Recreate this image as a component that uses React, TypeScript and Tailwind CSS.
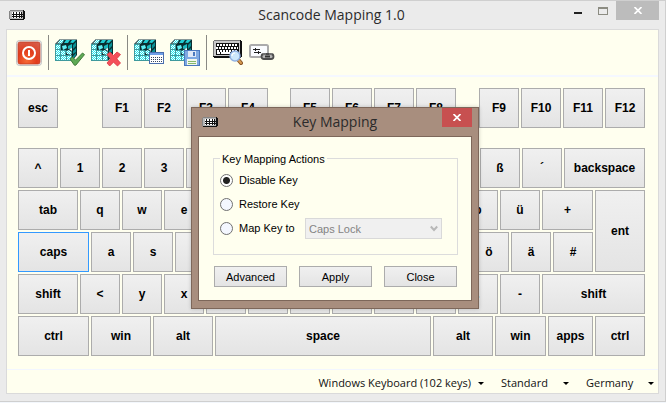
import { useState } from 'react';
import type { ReactNode } from 'react';

type KeyDef = {
  id: string;
  label: string;
  width: number;
  spacer?: boolean;
};

const key = (label: string, width = 40, id = label): KeyDef => ({ id, label, width });
const space = (id: string, width: number): KeyDef => ({ id, label: '', width, spacer: true });

const functionRow: KeyDef[] = [
  key('esc'),
  space('gap-1', 40),
  key('F1'),
  key('F2'),
  key('F3'),
  key('F4'),
  space('gap-2', 18),
  key('F5'),
  key('F6'),
  key('F7'),
  key('F8'),
  space('gap-3', 19),
  key('F9'),
  key('F10'),
  key('F11'),
  key('F12'),
];

const numberRow: KeyDef[] = [
  ...['^', '1', '2', '3', '4', '5', '6', '7', '8', '9', '0', 'ß', '´'].map((c) => key(c)),
  key('backspace', 81),
];

const tabRow: KeyDef[] = [
  key('tab', 60),
  ...['q', 'w', 'e', 'r', 't', 'z', 'u', 'i', 'o', 'p', 'ü'].map((c) => key(c)),
  key('+', 51),
];

const capsRow: KeyDef[] = [
  key('caps', 71),
  ...['a', 's', 'd', 'f', 'g', 'h', 'j', 'k', 'l', 'ö', 'ä', '#'].map((c) => key(c)),
];

const shiftRow: KeyDef[] = [
  key('shift', 60, 'shift-left'),
  ...['<', 'y', 'x', 'c', 'v', 'b', 'n', 'm', ',', '.', '-'].map((c) => key(c)),
  key('shift', 103, 'shift-right'),
];

const bottomRow: KeyDef[] = [
  key('ctrl', 71, 'ctrl-left'),
  key('win', 60, 'win-left'),
  key('alt', 60, 'alt-left'),
  key('space', 216),
  key('alt', 60, 'alt-right'),
  key('win', 51, 'win-right'),
  key('apps', 45),
  key('ctrl', 50, 'ctrl-right'),
];

function KeyboardGlyph() {
  return (
    <svg width="16" height="10" viewBox="0 0 16 10" shapeRendering="crispEdges" aria-hidden="true">
      <path d="M1 0h14v1h1v8h-1v1H1V9H0V1h1z" fill="#111" />
      <path d="M1 0h13v1H1zM0 1h1v8H0z" fill="#858585" />
      <path d="M1 1h14v8H1z" fill="#b9b9b9" />
      <path d="M3 2h10v6H3z" fill="#fff" />
      <path d="M3 4h11v1H3zM3 6h11v1H3zM4 2h1v6H4zM7 2h1v6H7zM10 2h1v6h-1zM12 2h1v6h-1zM14 1h1v8h-1z" fill="#111" />
    </svg>
  );
}

function PowerIcon() {
  return (
    <svg width="26" height="26" viewBox="0 0 26 26" aria-hidden="true">
      <defs>
        <radialGradient id="power" cx=".4" cy=".85" r=".9">
          <stop offset="0" stopColor="#f56a35" />
          <stop offset=".5" stopColor="#e23c1c" />
          <stop offset="1" stopColor="#d65a48" />
        </radialGradient>
      </defs>
      <rect x=".5" y=".5" width="25" height="25" rx="3" fill="#ececec" stroke="#c3c3c3" />
      <rect x="2" y="2" width="22" height="22" rx="2" fill="url(#power)" stroke="#c0391f" strokeWidth=".7" />
      <circle cx="13" cy="13" r="6" fill="none" stroke="#fff" strokeWidth="2" />
      <path d="M13 10v6" stroke="#fff" strokeWidth="2" />
    </svg>
  );
}

function RegistryIcon({ children }: { children: ReactNode }) {
  return (
    <svg width="30" height="28" viewBox="0 0 30 28" aria-hidden="true">
      <defs>
        <pattern id="dither" width="2" height="2" patternUnits="userSpaceOnUse">
          <rect width="2" height="2" fill="#2be6ee" />
          <path d="M0 0h1v1H0zM1 1h1v1H1z" fill="#f2ffff" />
        </pattern>
      </defs>
      <path d="M0 5 5 0h17v16l-5 6H0z" fill="#0a2f31" />
      {/* intact front tiles */}
      <g shapeRendering="crispEdges">
        <path d="M0 5h6v17H0zM6 11h5v11H6zM11 16h6v6h-6z" fill="#3f9a9d" />
        <path
          d="M1 6h4v4H1zM1 11h4v5H1zM6 12h4v4H6zM1 17h4v4H1zM6 17h5v4H6zM12 17h4v4h-4z"
          fill="url(#dither)"
        />
      </g>
      {/* top and side faces */}
      <path d="M2 4.500 5 1h4L7 4.500z" fill="url(#dither)" />
      <path d="m9 4 2-3h4l-2 3zM15 3.500 17 1h4l-3 3z" fill="#22cdd3" />
      <path d="M18 6l3-3v4l-3 3zM18 12l3-3v4l-3 2zM18 17l3-3v2l-3 4z" fill="#0a9095" />
      {/* loose tiles */}
      <path d="m7 7 4-1 1 3-4 2z" fill="#5ff0f5" />
      <path d="m13 7 4-2v4l-4 1z" fill="#1bb9bf" />
      <path d="m11 12 3-1 3 2-1 3-4-1z" fill="url(#dither)" />
      <path d="m14 10 3-1v3z" fill="#d8ffff" />
      <path d="M4.500.5H22M.5 5l4-4.500" stroke="#8a9a9a" fill="none" />
      {children}
    </svg>
  );
}

function CheckBadge() {
  return (
    <path
      d="m15 20 2.5-2 3 3.2L27.5 14l2 1.6-8.7 10.6h-1.4z"
      fill="#5eaa54"
      stroke="#3f7a39"
      strokeWidth="1"
      strokeLinejoin="round"
    />
  );
}

function CrossBadge() {
  return (
    <path
      d="m19 13 3.5 3.5L26 13l3.5 2.5-3.7 4.3 3.7 4.2-3 3-4-3.8-3.8 3.8-2.7-3 3.7-4.2-3.7-4.3z"
      fill="#f4505a"
      stroke="#dc3542"
      strokeWidth=".8"
      strokeLinejoin="round"
    />
  );
}

function CalendarBadge() {
  return (
    <g shapeRendering="crispEdges">
      <path d="M15 13h15v12H15z" fill="#4b6fae" />
      <path d="M16 14h13v2H16z" fill="#6f9fe8" />
      <path d="M16 16h13v8H16z" fill="#fff" />
      <path d="M17 18.500h11M17 20.500h11M17 22.500h11" stroke="#38455e" strokeDasharray="1 1" />
    </g>
  );
}

function DiskBadge() {
  return (
    <g shapeRendering="crispEdges">
      <path d="M14 11h15l1 1v15H14z" fill="#4a78bd" />
      <path d="M15 12h14v14H15z" fill="#7ea9e2" />
      <path d="M18 12h8v6h-8z" fill="#dfe9f7" />
      <path d="M23 13h2v4h-2z" fill="#4a78bd" />
      <path d="M17 20h10v6H17z" fill="#f2f7ee" />
      <path d="M18 22h8v1h-8zM18 24h8v1h-8z" fill="#86b96b" />
    </g>
  );
}

function KeyboardSearchIcon() {
  return (
    <svg width="30" height="26" viewBox="0 0 30 26" aria-hidden="true">
      <g shapeRendering="crispEdges">
        <path d="M1 0h27v1h1v16h-1v1H1v-1H0V1h1z" fill="#111" />
        <path d="M0 1h1v15H0zM1 0h26v1H1z" fill="#777" />
        <path d="M1 1h26v15H1z" fill="#c9c9c9" />
        <path d="M3 3h23v12H3z" fill="#111" />
        <path d="M4 4.500h21M3 7.500h22M4 10.500h21" stroke="#fff" strokeWidth="2" strokeDasharray="2 1" />
        <path d="M4 12h3v2H4zM8 12h9v2H8zM20 12h2v2h-2zM23 12h2v2h-2z" fill="#fff" />
      </g>
      <path d="m25.5 20 2.500 3" stroke="#8a5526" strokeWidth="4" strokeLinecap="round" />
      <path d="m25.500 20 2.500 3" stroke="#d69a50" strokeWidth="2" strokeLinecap="round" />
      <circle cx="22" cy="16" r="5" fill="#cde7fb" stroke="#8fb0e2" strokeWidth="1.4" />
      <path d="M19 16c0-2 1-3 3-3" stroke="#fff" fill="none" strokeWidth="1.2" />
    </svg>
  );
}

function KeyLinkIcon() {
  return (
    <svg width="26" height="17" viewBox="0 0 26 17" aria-hidden="true">
      <rect x="1" y="1" width="18" height="12" rx="1.5" fill="#fafcff" stroke="#ababab" strokeWidth="2" />
      <g shapeRendering="crispEdges">
        <path d="M4 5h7v1H4zM5 8h7v1H5zM6 4h1v3H6zM9 7h1v3H9z" fill="#222" />
      </g>
      <rect x="12.500" y="10" width="12" height="5" rx="2.500" fill="#b5b5b5" stroke="#4c4c4c" strokeWidth="1.800" />
      <path d="M16 12.500h5" stroke="#333" strokeWidth="2" />
      <path d="M14 10h3M20 10h3" stroke="#969696" />
    </svg>
  );
}

function ToolButton({ label, children }: { label: string; children: ReactNode }) {
  return (
    <button type="button" aria-label={label} className="flex shrink-0 items-center justify-center">
      {children}
    </button>
  );
}

function ToolSeparator() {
  return <div className="h-[35px] w-px shrink-0 bg-[#8a8a84]" />;
}

function Toolbar() {
  return (
    <div className="flex h-[47px] items-center gap-[6px] border-b-2 border-[#f5f8ff] pr-2 pl-[9px]">
      <ToolButton label="Exit">
        <PowerIcon />
      </ToolButton>
      <ToolSeparator />
      <ToolButton label="Apply mapping">
        <RegistryIcon>
          <CheckBadge />
        </RegistryIcon>
      </ToolButton>
      <ToolButton label="Remove mapping">
        <RegistryIcon>
          <CrossBadge />
        </RegistryIcon>
      </ToolButton>
      <ToolSeparator />
      <ToolButton label="Show mapping">
        <RegistryIcon>
          <CalendarBadge />
        </RegistryIcon>
      </ToolButton>
      <ToolButton label="Save mapping">
        <RegistryIcon>
          <DiskBadge />
        </RegistryIcon>
      </ToolButton>
      <ToolSeparator />
      <ToolButton label="Detect key">
        <KeyboardSearchIcon />
      </ToolButton>
      <ToolButton label="Link key">
        <KeyLinkIcon />
      </ToolButton>
    </div>
  );
}

type KeyProps = {
  item: KeyDef;
  selected: string;
  onSelect: (id: string) => void;
};

function Key({ item, selected, onSelect }: KeyProps) {
  if (item.spacer) {
    return <div className="basis-0" style={{ flexGrow: item.width }} />;
  }
  // the two border pixels are not part of the flexible width
  return (
    <button
      type="button"
      onClick={() => onSelect(item.id)}
      className={`min-h-10 min-w-0 basis-0 border bg-linear-to-b from-[#f0f0f0] to-[#e4e4e4] text-center text-[12px] leading-4 font-bold text-black ${
        item.id === selected ? 'border-[#3399ff]' : 'border-[#acacac]'
      }`}
      style={{ flexGrow: item.width - 2 }}
    >
      {item.label}
    </button>
  );
}

function KeyRow({ keys, selected, onSelect }: { keys: KeyDef[]; selected: string; onSelect: (id: string) => void }) {
  return (
    <div className="flex gap-[2px]">
      {keys.map((item) => (
        <Key key={item.id} item={item} selected={selected} onSelect={onSelect} />
      ))}
    </div>
  );
}

function Keyboard() {
  const [selected, setSelected] = useState('caps');

  return (
    <div className="flex flex-col gap-[2px] pt-[11px] pr-[13px] pb-[13px] pl-[11px]">
      <div className="pb-[18px]">
        <KeyRow keys={functionRow} selected={selected} onSelect={setSelected} />
      </div>
      <KeyRow keys={numberRow} selected={selected} onSelect={setSelected} />
      <div className="flex gap-[2px]">
        <div className="flex grow-[575] basis-0 flex-col gap-[2px]">
          <KeyRow keys={tabRow} selected={selected} onSelect={setSelected} />
          <KeyRow keys={capsRow} selected={selected} onSelect={setSelected} />
        </div>
        <Key item={key('ent', 50)} selected={selected} onSelect={setSelected} />
      </div>
      <KeyRow keys={shiftRow} selected={selected} onSelect={setSelected} />
      <KeyRow keys={bottomRow} selected={selected} onSelect={setSelected} />
    </div>
  );
}

function StatusMenu({ label }: { label: string }) {
  return (
    <button type="button" className="flex min-w-[68px] items-center justify-between gap-[7px]">
      {label}
      <svg width="6" height="3" viewBox="0 0 6 3" aria-hidden="true">
        <path d="M0 0h6L3 3z" fill="#000" />
      </svg>
    </button>
  );
}

function StatusBar() {
  return (
    <div className="flex h-6 items-center justify-end gap-[17px] border-t border-[#f2f6ff] pt-[3px] pr-1 font-['Open_Sans','Noto_Sans',sans-serif] text-[11px] leading-4 text-[#111]">
      <StatusMenu label="Windows Keyboard (102 keys)" />
      <StatusMenu label="Standard" />
      <StatusMenu label="Germany" />
    </div>
  );
}

function ActionOption({ id, label, checked, onChange }: { id: string; label: string; checked: boolean; onChange: () => void }) {
  return (
    <div className="flex h-6 items-center gap-[6px]">
      <input
        id={id}
        type="radio"
        name="action"
        checked={checked}
        onChange={onChange}
        className="size-[13px] appearance-none rounded-full border border-[#707070] bg-[#f4f7ff] checked:bg-[radial-gradient(circle,#222_0_3px,#fff_4px)]"
      />
      <label htmlFor={id}>{label}</label>
    </div>
  );
}

function DialogButton({ label }: { label: string }) {
  return (
    <button
      type="button"
      className="h-[21px] flex-1 border border-[#acacac] bg-linear-to-b from-[#f0f0f0] to-[#e4e4e4] text-center"
    >
      {label}
    </button>
  );
}

function KeyMappingDialog() {
  const [action, setAction] = useState('disable');

  return (
    <div
      role="dialog"
      aria-label="Key Mapping"
      className="absolute top-[107px] left-[191px] w-72 border border-[#7d675a] bg-[#a88e7e] px-[6px] pb-[7px] shadow-[0_0_4px_rgba(0,0,0,0.2)]"
    >
      <div className="flex h-7 items-start justify-between pl-1">
        <div className="flex w-[26px] pt-[9px]">
          <KeyboardGlyph />
        </div>
        <h2 className="pt-1 font-['Open_Sans','Noto_Sans',sans-serif] text-[14px] leading-5 text-[#2b2b2b]">Key Mapping</h2>
        <button type="button" aria-label="Close dialog" className="flex h-[19px] w-[30px] items-center justify-center bg-[#c75050]">
          <svg width="8" height="7" viewBox="0 0 8 7" aria-hidden="true">
            <path d="m.5 0 7 7m0-7-7 7" stroke="#fff" strokeWidth="1.700" />
          </svg>
        </button>
      </div>
      <div className="border border-[#7d675a] bg-[#ffffef] pt-[14px] pr-[13px] pb-[13px] pl-[14px] text-[11px] leading-4 text-black">
        <fieldset className="border border-[#dcdcdc] pt-[2px] pr-[7px] pb-[14px] pl-[6px]">
          <legend className="h-[15px] px-[2px]">Key Mapping Actions</legend>
          <ActionOption
            id="disable"
            label="Disable Key"
            checked={action === 'disable'}
            onChange={() => setAction('disable')}
          />
          <ActionOption
            id="restore"
            label="Restore Key"
            checked={action === 'restore'}
            onChange={() => setAction('restore')}
          />
          <div className="flex items-center justify-between pr-2">
            <ActionOption id="map" label="Map Key to" checked={action === 'map'} onChange={() => setAction('map')} />
            <div className="grid w-[137px] items-center pt-px">
              <select
                disabled={action !== 'map'}
                aria-label="Target key"
                className="col-start-1 row-start-1 h-[21px] appearance-none border border-[#d9d9d9] bg-[#f0f0f0] pl-[3px] text-[#838383] opacity-100"
              >
                <option>Caps Lock</option>
              </select>
              <svg
                width="8"
                height="7"
                viewBox="0 0 8 7"
                className="pointer-events-none col-start-1 row-start-1 mr-1 justify-self-end"
                aria-hidden="true"
              >
                <path d="m.8 1.500 3.200 3.500 3.200-3.500" fill="none" stroke="#b8b8b8" strokeWidth="2" />
              </svg>
            </div>
          </div>
        </fieldset>
        <div className="mt-[11px] flex gap-3 px-px">
          <DialogButton label="Advanced" />
          <DialogButton label="Apply" />
          <DialogButton label="Close" />
        </div>
      </div>
    </div>
  );
}

function TitleBar() {
  return (
    <header className="flex h-7 items-start justify-between">
      <div className="flex w-[98px] pt-[9px] pl-[3px]">
        <KeyboardGlyph />
      </div>
      <h1 className="pt-1 font-['Open_Sans','Noto_Sans',sans-serif] text-[14px] leading-5 text-[#2b2b2b]">
        Scancode Mapping 1.0
      </h1>
      <div className="flex w-[100px] justify-end">
        <button type="button" aria-label="Minimize" className="flex h-[19px] w-6 items-center justify-center pt-[5px]">
          <span className="h-[2px] w-2 bg-[#222]" />
        </button>
        <button type="button" aria-label="Maximize" className="flex h-[19px] w-[26px] items-center justify-center">
          <span className="h-2 w-[10px] border border-t-2 border-[#8c8c82]" />
        </button>
        <button type="button" aria-label="Close" className="flex h-[19px] w-[43px] items-center justify-center bg-[#bcbcbc]">
          <svg width="8" height="7" viewBox="0 0 8 7" aria-hidden="true">
            <path d="m.5 0 7 7m0-7-7 7" stroke="#fff" strokeWidth="1.700" />
          </svg>
        </button>
      </div>
    </header>
  );
}

export default function App() {
  return (
    <div className="relative min-h-screen bg-[#f3f7fc] font-['Liberation_Sans',Arial,sans-serif]">
      <div className="border-t border-r border-b border-[#cfcfcf] bg-[#ebebeb] px-[6px] pb-[7px]">
        <TitleBar />
        <main className="border border-[#dadada] bg-[#ffffef]">
          <Toolbar />
          <Keyboard />
          <StatusBar />
        </main>
      </div>
      <KeyMappingDialog />
    </div>
  );
}
